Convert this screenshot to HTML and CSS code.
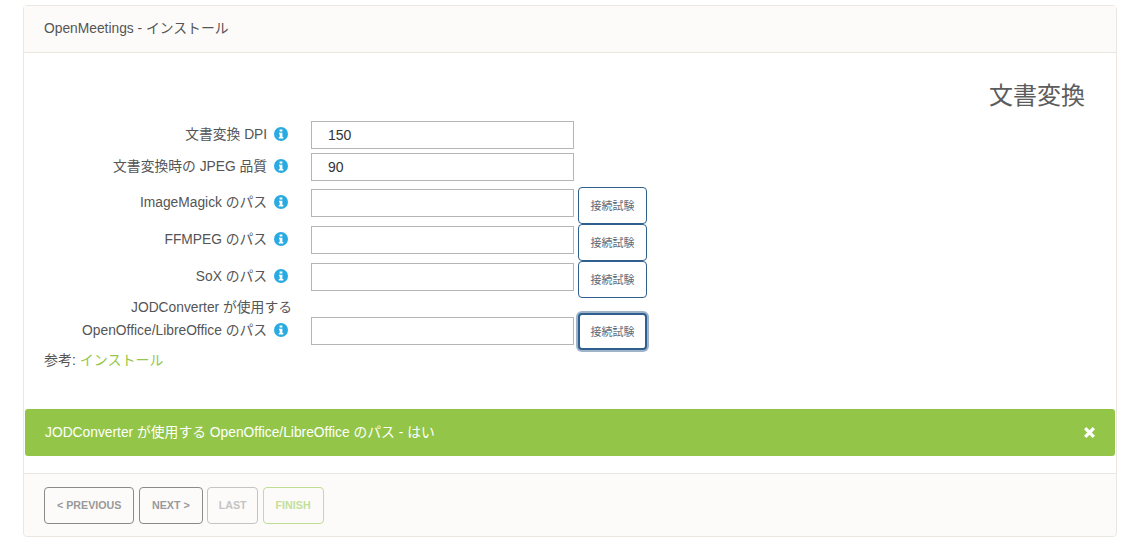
FILE: index.html
```html
<!doctype html>
<html lang="ja">

<head>
    <meta charset="utf-8">
    <title>OpenMeetings - インストール</title>
    <link rel="stylesheet" href="styles.css">
</head>

<body>
    <svg class="defs" width="0" height="0">
        <symbol id="info" viewBox="0 0 14 14">
            <circle cx="7" cy="7" r="7" fill="#29abe2" />
            <path d="M5.600 2.600h2.800v2H5.600zM5 5.800h3.400v4.200h.9v1.500H4.800V10h.9V7.300H5z" fill="#fff" />
        </symbol>
    </svg>
    <div class="card">
        <div class="card-header">OpenMeetings - インストール</div>
        <div class="card-body">
            <h2 class="step-title">文書変換</h2>
            <div class="form">
                <div class="row row-plain">
                    <label class="row-label">文書変換 DPI <svg class="info"><use href="#info" /></svg></label>
                    <input class="field" type="text" value="150">
                </div>
                <div class="row row-plain">
                    <label class="row-label">文書変換時の JPEG 品質 <svg class="info"><use href="#info" /></svg></label>
                    <input class="field" type="text" value="90">
                </div>
                <div class="row row-path">
                    <label class="row-label">ImageMagick のパス <svg class="info"><use href="#info" /></svg></label>
                    <input class="field" type="text">
                    <button class="btn-check" type="button">接続試験</button>
                </div>
                <div class="row row-path">
                    <label class="row-label">FFMPEG のパス <svg class="info"><use href="#info" /></svg></label>
                    <input class="field" type="text">
                    <button class="btn-check" type="button">接続試験</button>
                </div>
                <div class="row row-path">
                    <label class="row-label">SoX のパス <svg class="info"><use href="#info" /></svg></label>
                    <input class="field" type="text">
                    <button class="btn-check" type="button">接続試験</button>
                </div>
                <div class="row row-last">
                    <label class="row-label">JODConverter が使用する<br>OpenOffice/LibreOffice のパス <svg class="info"><use href="#info" /></svg></label>
                    <input class="field" type="text">
                    <button class="btn-check btn-focus" type="button">接続試験</button>
                </div>
            </div>
            <p class="note">参考: <a href="#">インストール</a></p>
        </div>
        <div class="alert">
            <span>JODConverter が使用する OpenOffice/LibreOffice のパス - はい</span>
            <svg class="alert-close" width="13" height="13" viewBox="0 0 12 12">
                <path d="M2 2l8 8M10 2l-8 8" stroke="#fff" stroke-width="3" />
            </svg>
        </div>
        <div class="card-footer">
            <button class="btn" type="button">&lt; PREVIOUS</button>
            <button class="btn" type="button">NEXT &gt;</button>
            <button class="btn btn-off" type="button">LAST</button>
            <button class="btn btn-finish" type="button">FINISH</button>
        </div>
    </div>
</body>

</html>
```

FILE: styles.css
```css
html, body {
    margin: 0;
    background: #fff;
}
body {
    padding: 5px 10px 9px 23px;
    font-family: "Liberation Sans", "Noto Sans CJK JP", sans-serif;
    font-size: 13.8px;
    color: #555;
}
.defs {
    display: block;
    height: 0;
}
.card {
    border: 1px solid #ebe6df;
    border-radius: 4px;
    height: 530px;
    display: flex;
    flex-direction: column;
}
.card-header {
    height: 46px;
    line-height: 45px;
    padding: 0 20px;
    background: #fcfbf9;
    border-bottom: 1px solid #ebe6df;
}
.card-body {
    height: 356px;
    padding: 0 31px 0 20px;
}
.step-title {
    margin: 0;
    padding-top: 26px;
    height: 42px;
    line-height: 34px;
    text-align: right;
    font-size: 24px;
    font-weight: 400;
    color: #5c5c5c;
}
.row {
    display: flex;
    align-items: center;
}
.row-plain {
    height: 28px;
    margin-bottom: 4px;
}
.row-path {
    height: 37px;
    align-items: flex-start;
}
.row-path:nth-child(3) {
    margin-top: 6px;
}
.row-path .row-label {
    margin-top: 3px;
}
.row-path .field {
    margin-top: 2px;
}
.row-last {
    height: 54px;
    align-items: flex-end;
}
.row-last .row-label {
    line-height: 23px;
    margin-bottom: 10px;
}
.row-last .field {
    margin-bottom: 7px;
}
.row-last .btn-check {
    margin-bottom: 2px;
}
.row-label {
    width: 248px;
    margin-right: 19px;
    text-align: right;
    line-height: 26px;
}
.info {
    width: 14px;
    height: 14px;
    margin-left: 3px;
    margin-right: 4px;
    vertical-align: -2px;
}
.field {
    box-sizing: border-box;
    width: 263px;
    height: 28px;
    padding: 0 16px;
    border: 1px solid #b5b5b5;
    background: #fff;
    font: inherit;
    font-size: 14px;
    color: #333;
}
.btn-check {
    box-sizing: border-box;
    width: 69px;
    height: 37px;
    margin-left: 4px;
    padding: 0 0 2px;
    border: 1px solid #2f5f8f;
    border-radius: 4px;
    background: #fff;
    font: inherit;
    font-size: 11px;
    color: #5d6b78;
}
.btn-focus {
    border-width: 2px;
    box-shadow: 0 0 0 2px #9fb4c9;
}
.note {
    margin: -4px 0 0;
    line-height: 24px;
    font-size: 14px;
}
.note a {
    color: #94c74a;
    text-decoration: none;
}
.alert {
    box-sizing: border-box;
    height: 47px;
    margin: 0 1px;
    padding: 0 19px 4px 20px;
    display: flex;
    align-items: center;
    justify-content: space-between;
    background: #93c648;
    border-radius: 3px;
    color: #fff;
}
.alert-close {
    margin: 3px 0 0;
}
.card-footer {
    flex: 1;
    margin-top: 17px;
    padding: 13px 20px 0;
    display: flex;
    gap: 4.5px;
    align-items: flex-start;
    background: #fcfbf9;
    border-top: 1px solid #ebe6df;
    border-radius: 0 0 4px 4px;
}
.btn {
    box-sizing: border-box;
    height: 37px;
    padding: 0 12px 2px;
    border: 1px solid #8a8a8a;
    border-radius: 4px;
    background: transparent;
    font: bold 10.7px "Liberation Sans", sans-serif;
    color: #999;
}
.btn-off {
    padding: 0 10.5px 2px;
    border-color: #c4c4c4;
    color: #c4c4c4;
}
.btn-finish {
    border-color: #bfdd95;
    color: #c3e09a;
}
```
